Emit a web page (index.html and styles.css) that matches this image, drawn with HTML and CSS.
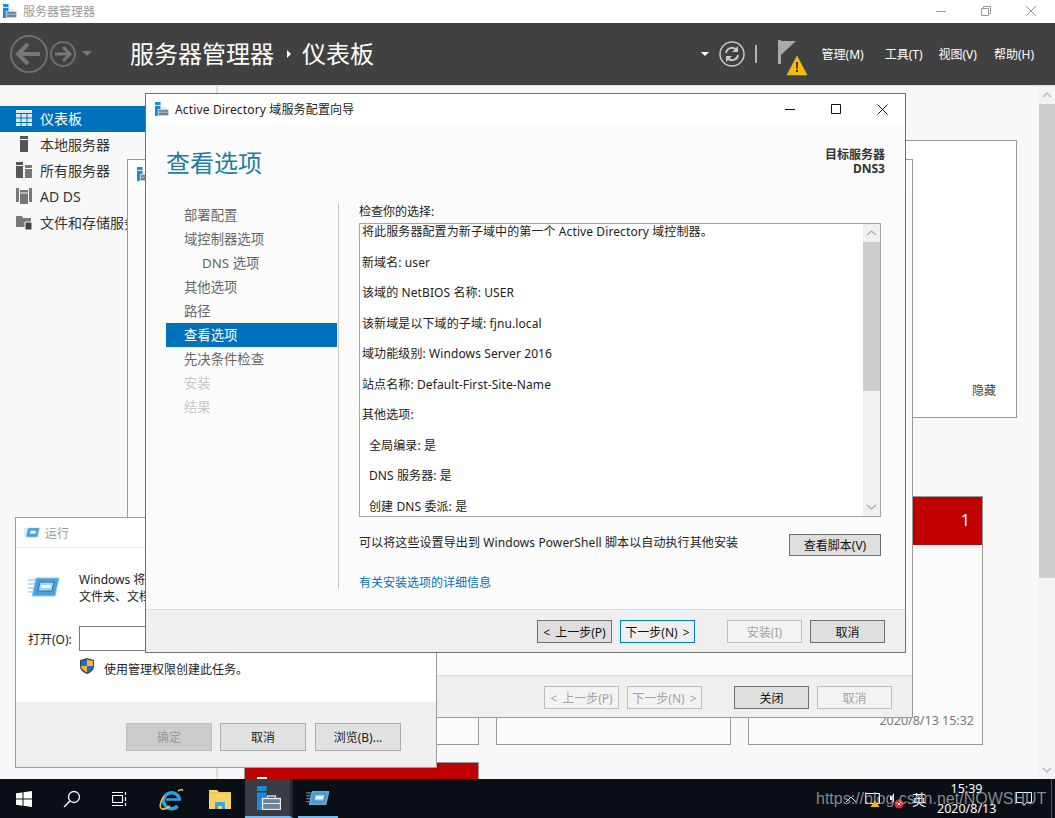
FILE: index.html
```html
<!DOCTYPE html>
<html lang="zh-CN">
<head>
    <meta charset="UTF-8">
    <title>服务器管理器</title>
    <link rel="stylesheet" href="styles.css">
</head>
<body>
    <svg class="sprites" width="0" height="0">
        <symbol id="srv" viewBox="0 0 24 24">
            <rect x="0" y="0" width="9.500" height="5" fill="#1b8ad8"/>
            <rect x="0" y="6.500" width="9.500" height="17.500" fill="#1b8ad8"/>
            <rect x="5.500" y="12.500" width="18" height="11" fill="#6d8496" stroke="#e8eef2" stroke-width="1.300"/>
            <path d="M10.500 12.500V10h8v2.500" fill="none" stroke="#cfd8de" stroke-width="1.300"/>
            <path d="M6 17.500h17" stroke="#e8eef2" stroke-width="1"/>
        </symbol>
        <symbol id="run" viewBox="0 0 32 22">
            <path d="M8 2H31L27 20H4Z" fill="#4d9fdc" stroke="#8ecbf2" stroke-width="1"/>
            <path d="M12 6H26L24 15H10Z" fill="#a5d4f3" stroke="#2c76ad" stroke-width="1"/>
            <path d="M13.500 9H23L22.500 12H13Z" fill="#eef8ff"/>
            <path d="M0 4h7M0 8h6M0 12h5M0 16h4" stroke="#7fbdea" stroke-width="1.200"/>
        </symbol>
    </svg>

    <div class="app">
        <div class="app-title">
            <svg class="ico-srv"><use href="#srv"/></svg>
            <span>服务器管理器</span>
            <div class="win-ctrl">
                <svg width="10" height="10"><path d="M0 5.500h10" stroke="#999"/></svg>
                <svg width="10" height="10"><path d="M.5 2.500h7v7h-7zM2.500 2.500v-2h7v7h-2" fill="none" stroke="#999"/></svg>
                <svg width="10" height="10"><path d="M0 0l10 10M10 0L0 10" stroke="#999"/></svg>
            </div>
        </div>

        <header class="app-header">
            <svg class="nav-btns" width="82" height="40" viewBox="0 0 82 40">
                <circle cx="19" cy="20" r="18" fill="none" stroke="#6e6e6e" stroke-width="2"/>
                <path d="M8 20h22M18 10L8 20l10 10" fill="none" stroke="#777" stroke-width="4"/>
                <circle cx="53" cy="20" r="12" fill="none" stroke="#6e6e6e" stroke-width="2"/>
                <path d="M45 20h15M53 13l7 7-7 7" fill="none" stroke="#777" stroke-width="3"/>
                <path d="M72 17h10l-5 5z" fill="#777"/>
            </svg>
            <div class="crumb">
                <span>服务器管理器</span>
                <i class="crumb-arrow"></i>
                <span>仪表板</span>
            </div>
            <div class="head-tools">
                <i class="drop-arrow"></i>
                <svg class="refresh" width="26" height="26" viewBox="0 0 26 26">
                    <circle cx="13" cy="13" r="12" fill="none" stroke="#c8c8c8" stroke-width="1.500"/>
                    <path d="M7 12a6 6 0 0 1 10.500-3M19 14a6 6 0 0 1-10.500 3" fill="none" stroke="#c8c8c8" stroke-width="2"/>
                    <path d="M19 5v6h-6zM7 21v-6h6z" fill="#c8c8c8"/>
                </svg>
                <i class="head-sep"></i>
                <svg class="flag" width="30" height="36" viewBox="0 0 30 36">
                    <rect x="0" y="0" width="3" height="24" fill="#a9a9a9"/>
                    <path d="M3 1h15L3 15z" fill="#a9a9a9"/>
                    <path d="M19 16l10 19H9z" fill="#fdb900" stroke="#c9c9a0" stroke-width=".5"/>
                    <path d="M18 22h2l-.4 7h-1.200zM18 30h2v2h-2z" fill="#222"/>
                </svg>
                <nav class="menu">
                    <a class="m1">管理(M)</a>
                    <a class="m2">工具(T)</a>
                    <a class="m3">视图(V)</a>
                    <a class="m4">帮助(H)</a>
                </nav>
            </div>
        </header>

        <div class="app-body">
            <aside class="side">
                <div class="side-item active">
                    <svg width="16" height="16" viewBox="0 0 16 16"><path d="M0 0h16v3H0zM0 4h4.500v3.500H0zM5.500 4h5v3.500h-5zM11.500 4H16v3.500h-4.500zM0 8.500h4.500V12H0zM5.500 8.500h5V12h-5zM11.500 8.500H16V12h-4.500zM0 13h4.500v3H0zM5.500 13h5v3h-5zM11.500 13H16v3h-4.500z" fill="#dbeaf5"/></svg>
                    仪表板
                </div>
                <div class="side-item">
                    <svg width="16" height="16" viewBox="0 0 16 16"><path d="M4 0h8v3H4zM4 4h8v12H4z" fill="#555"/></svg>
                    本地服务器
                </div>
                <div class="side-item">
                    <svg width="16" height="16" viewBox="0 0 16 16"><path d="M0 0h7v3H0zM0 4h7v12H0z" fill="#555"/><path d="M9 3h7v3H9zM9 7h7v9H9z" fill="#777"/></svg>
                    所有服务器
                </div>
                <div class="side-item">
                    <svg width="16" height="16" viewBox="0 0 16 16"><path d="M0 0h3v14H0zM13 0h3v14h-3zM4 2h8v14H4z" fill="#777"/><path d="M4 5h8" stroke="#f8f8f8"/></svg>
                    AD DS
                </div>
                <div class="side-item">
                    <svg width="16" height="16" viewBox="0 0 16 16"><path d="M0 2h6l1 2h8v9H0z" fill="#777"/><path d="M9 8h7v8H9z" fill="#444" stroke="#f8f8f8"/></svg>
                    文件和存储服务
                </div>
            </aside>
            <main class="content">
                <section class="welcome">
                    <span class="hide-link">隐藏</span>
                </section>
                <section class="tiles">
                    <div class="tile"><div class="tile-head"></div></div>
                    <div class="tile"><div class="tile-head"></div></div>
                    <div class="tile">
                        <div class="tile-head"><span>1</span></div>
                        <div class="tile-time">2020/8/13 15:32</div>
                    </div>
                    <div class="tile"><div class="tile-head"><i class="tile-mark"></i></div></div>
                </section>
            </main>
            <div class="scrollbar page-scroll">
                <svg class="sb-arrow" width="16" height="18"><path d="M4 11l4-4 4 4" fill="none" stroke="#bbb" stroke-width="1.500"/></svg>
                <div class="sb-thumb"></div>
                <svg class="sb-arrow" width="16" height="18"><path d="M4 7l4 4 4-4" fill="none" stroke="#bbb" stroke-width="1.500"/></svg>
            </div>
        </div>
    </div>

    <footer class="taskbar">
        <svg class="tb-win" width="16" height="16" viewBox="0 0 16 16"><path d="M0 2.300l6.500-.9v6.200H0zM7.500 1.300L16 0v7.600H7.500zM0 8.500h6.500v6.200L0 13.700zM7.500 8.500H16V16l-8.500-1.200z" fill="#fff"/></svg>
        <svg class="tb-search" width="18" height="18" viewBox="0 0 18 18"><circle cx="11" cy="7" r="5.500" fill="none" stroke="#fff" stroke-width="1.300"/><path d="M7 11l-6 6" stroke="#fff" stroke-width="1.500"/></svg>
        <svg class="tb-view" width="16" height="16" viewBox="0 0 16 16"><path d="M.5 4.500h10v7H.5zM0 1.500h11M0 14.500h11M13.500 1v3M13.500 6v4M13.500 12v3" fill="none" stroke="#fff" stroke-width="1.200"/></svg>
        <svg class="tb-ie" width="24" height="24" viewBox="0 0 24 24">
            <path d="M20.500 13.500a8 8 0 1 0-2 5.500" fill="none" stroke="#2f9fe0" stroke-width="3.400"/>
            <path d="M7 12.500h14" stroke="#2f9fe0" stroke-width="2.600"/>
            <path d="M19 4c3-2 5-2 4.500 0M5 9c-4 6-5 12-2 13 2 .6 5-.8 8-3" fill="none" stroke="#f1c232" stroke-width="1.600"/>
        </svg>
        <svg class="tb-folder" width="22" height="20" viewBox="0 0 22 20">
            <path d="M0 1h8l2 2h12v17H0z" fill="#f6d365"/>
            <path d="M0 4h22" stroke="#e8b93f"/>
            <path d="M6 13h10v7h-3v-3H9v3H6z" fill="#39a4e0"/>
        </svg>
        <div class="tb-active"><svg width="24" height="24"><use href="#srv"/></svg></div>
        <div class="tb-running"><svg width="24" height="16"><use href="#run"/></svg></div>
        <div class="tray">
            <svg class="tr-up" width="12" height="8"><path d="M1 7l5-5 5 5" fill="none" stroke="#fff"/></svg>
            <svg class="tr-net" width="16" height="14" viewBox="0 0 16 14">
                <path d="M.5.500h14v10H.5z" fill="none" stroke="#fff"/>
                <path d="M10 7l4.500 7h-9z" fill="#fdb900"/>
            </svg>
            <svg class="tr-vol" width="14" height="16" viewBox="0 0 14 16">
                <path d="M0 3h2l2-3v10L2 7H0z" fill="#fff"/>
                <circle cx="9" cy="11" r="4.500" fill="#d9262e"/>
                <path d="M7.500 9.500l3 3M10.500 9.500l-3 3" stroke="#fff"/>
            </svg>
            <span class="tr-ime">英</span>
            <div class="tr-clock">
                <div>15:39</div>
                <div>2020/8/13</div>
            </div>
            <svg class="tr-note" width="16" height="14" viewBox="0 0 16 14"><path d="M.5.500h15v10h-5l-2.500 3-2.500-3h-5z" fill="none" stroke="#fff"/></svg>
            <i class="tr-show"></i>
        </div>
    </footer>

    <div class="window win-back">
        <div class="back-title"><svg class="ico-srv"><use href="#srv"/></svg></div>
        <div class="back-body"></div>
        <div class="win-foot">
            <button class="btn btn-off">&lt; 上一步(P)</button>
            <button class="btn btn-off">下一步(N) &gt;</button>
            <button class="btn gap-l">关闭</button>
            <button class="btn btn-off">取消</button>
        </div>
    </div>

    <div class="window win-run">
        <div class="run-title">
            <svg width="16" height="11"><use href="#run"/></svg>
            <span>运行</span>
        </div>
        <div class="run-body">
            <div class="run-desc">
                <svg width="32" height="22"><use href="#run"/></svg>
                <p>Windows 将根据你所键入的名称，为你打开相应的程序、<br>文件夹、文档或 Internet 资源。</p>
            </div>
            <div class="run-open">
                <label>打开(O):</label>
                <div class="run-input"></div>
            </div>
            <div class="run-admin">
                <svg width="14" height="16" viewBox="0 0 14 16">
                    <path d="M7 0l7 2v6c0 4-3 6.500-7 8-4-1.500-7-4-7-8V2z" fill="#444"/>
                    <path d="M7 1.500V8H1V3z" fill="#1f6fc4"/>
                    <path d="M7 1.500l6 1.500v5H7z" fill="#f5b93a"/>
                    <path d="M7 8h6c0 3-2.500 5-6 6.500z" fill="#1f6fc4"/>
                    <path d="M7 8v6.500C4 13 1.300 11 1 8z" fill="#f5b93a"/>
                </svg>
                <span>使用管理权限创建此任务。</span>
            </div>
        </div>
        <div class="run-foot">
            <button class="rbtn rbtn-off">确定</button>
            <button class="rbtn">取消</button>
            <button class="rbtn rbtn-last">浏览(B)...</button>
        </div>
    </div>

    <div class="window win-wizard">
        <div class="wiz-title">
            <svg class="ico-srv"><use href="#srv"/></svg>
            <span>Active Directory 域服务配置向导</span>
            <div class="wiz-ctrl">
                <svg width="11" height="11"><path d="M0 5.500h10" stroke="#111"/></svg>
                <svg width="11" height="11"><path d="M.5.500h9v9h-9z" fill="none" stroke="#111"/></svg>
                <svg width="11" height="11"><path d="M.5.500l10 10M10.500.500l-10 10" stroke="#111"/></svg>
            </div>
        </div>
        <div class="wiz-head">
            <h1>查看选项</h1>
            <div class="wiz-target">目标服务器<br>DNS3</div>
        </div>
        <div class="wiz-main">
            <ul class="steps">
                <li>部署配置</li>
                <li>域控制器选项</li>
                <li class="sub">DNS 选项</li>
                <li>其他选项</li>
                <li>路径</li>
                <li class="current">查看选项</li>
                <li>先决条件检查</li>
                <li class="off">安装</li>
                <li class="off">结果</li>
            </ul>
            <div class="pane">
                <div class="pane-label">检查你的选择:</div>
                <div class="review">
                    <div class="review-text">
                        <p>将此服务器配置为新子域中的第一个 Active Directory 域控制器。</p>
                        <p>新域名: user</p>
                        <p>该域的 NetBIOS 名称: USER</p>
                        <p>该新域是以下域的子域: fjnu.local</p>
                        <p>域功能级别: Windows Server 2016</p>
                        <p>站点名称: Default-First-Site-Name</p>
                        <p>其他选项:</p>
                        <p class="indent">全局编录: 是</p>
                        <p class="indent">DNS 服务器: 是</p>
                        <p class="indent">创建 DNS 委派: 是</p>
                    </div>
                    <div class="scrollbar review-scroll">
                        <svg class="sb-arrow" width="17" height="18"><path d="M4 11l4.500-4 4.500 4" fill="none" stroke="#aaa" stroke-width="1.300"/></svg>
                        <div class="sb-thumb"></div>
                        <div class="sb-rest"></div>
                        <svg class="sb-arrow" width="17" height="18"><path d="M4 7l4.500 4 4.500-4" fill="none" stroke="#aaa" stroke-width="1.300"/></svg>
                    </div>
                </div>
                <div class="export-row">
                    <span>可以将这些设置导出到 Windows PowerShell 脚本以自动执行其他安装</span>
                    <button class="btn btn-script">查看脚本(V)</button>
                </div>
                <a class="more-link">有关安装选项的详细信息</a>
            </div>
        </div>
        <div class="win-foot wiz-foot">
            <button class="btn">&lt; 上一步(P)</button>
            <button class="btn btn-focus">下一步(N) &gt;</button>
            <button class="btn btn-off gap-l">安装(I)</button>
            <button class="btn">取消</button>
        </div>
    </div>

    <div class="watermark">https://blog.csdn.net/NOWSHUT</div>
</body>
</html>
```

FILE: styles.css
```css
* {
    box-sizing: border-box;
}
html, body {
    margin: 0;
    height: 100%;
}
body {
    position: relative;
    width: 1055px;
    height: 818px;
    overflow: hidden;
    display: flex;
    flex-direction: column;
    font-family: "Noto Sans", "Noto Sans CJK SC", sans-serif;
    font-size: 12px;
    color: #222;
    background-color: #f8f8f8;
}
.sprites {
    position: absolute;
}
.ico-srv {
    width: 14px;
    height: 14px;
    flex: none;
}

/* main app window */
.app {
    flex: 1;
    min-height: 0;
    display: flex;
    flex-direction: column;
}
.app-title {
    height: 23px;
    display: flex;
    align-items: center;
    padding: 0 0 1px 3px;
    background-color: #fff;
    color: #999;
}
.app-title span {
    margin-left: 6px;
}
.win-ctrl {
    margin-left: auto;
    display: flex;
    gap: 35px;
    padding-right: 19px;
}
.app-header {
    height: 63px;
    flex: none;
    display: flex;
    align-items: center;
    padding-left: 10px;
    background-color: #414141;
    border-bottom: 1px solid #e4e4e4;
    color: #fff;
}
.crumb {
    margin-left: 38px;
    display: flex;
    align-items: center;
    font-size: 24px;
    line-height: 30px;
}
.crumb-arrow {
    width: 0;
    height: 0;
    margin: 0 11px 0 13px;
    border-left: 4px solid #fff;
    border-top: 4px solid transparent;
    border-bottom: 4px solid transparent;
}
.head-tools {
    margin-left: auto;
    display: flex;
    align-items: center;
}
.drop-arrow {
    width: 0;
    height: 0;
    margin-right: 10px;
    border-top: 4px solid #fff;
    border-left: 4px solid transparent;
    border-right: 4px solid transparent;
}
.head-sep {
    width: 2px;
    height: 18px;
    margin: 0 21px 0 10px;
    background-color: #b5b5b5;
}
.flag {
    margin-top: 8px;
    margin-right: 14px;
}
.menu {
    display: flex;
    padding-right: 21px;
}
.menu a {
    white-space: nowrap;
}
.m2 {
    margin-left: 21px;
}
.m3 {
    margin-left: 16px;
}
.m4 {
    margin-left: 17px;
}

.app-body {
    flex: 1;
    min-height: 0;
    display: flex;
    overflow: hidden;
}
.side {
    width: 218px;
    flex: none;
    padding-top: 20px;
    border-right: 2px solid #dedede;
    background-color: #f8f8f8;
}
.side-item {
    height: 26px;
    display: flex;
    align-items: center;
    gap: 8px;
    padding: 0 0 2px 16px;
    font-size: 14px;
    white-space: nowrap;
    color: #333;
}
.side-item.active {
    background-color: #0072bc;
    color: #fff;
}
.content {
    flex: 1;
    min-width: 0;
    padding: 54px 22px 0 8px;
    overflow: hidden;
}
.welcome {
    height: 278px;
    position: relative;
    background-color: #fff;
    border: 1px solid #999;
}
.hide-link {
    position: absolute;
    right: 20px;
    bottom: 18px;
    color: #444;
}
.tiles {
    margin: 78px 0 0 18px;
    display: grid;
    grid-template-columns: repeat(3, 235px);
    grid-auto-rows: 249px;
    column-gap: 17px;
    row-gap: 17px;
}
.tile {
    display: flex;
    flex-direction: column;
    background-color: #fcfcfc;
    border: 1px solid #999;
}
.tile-head {
    height: 48px;
    padding: 12px 12px 0;
    background-color: #c00000;
    color: #fff;
    font-size: 16px;
    text-align: right;
}
.tile-mark {
    display: block;
    width: 10px;
    height: 6px;
    margin-top: 2px;
    background-color: #fff;
}
.tile-time {
    margin-top: auto;
    padding: 0 8px 15px 0;
    text-align: right;
    font-size: 12.500px;
    color: #777;
}

.scrollbar {
    display: flex;
    flex-direction: column;
    background-color: #f3f3f3;
}
.sb-arrow {
    flex: none;
}
.sb-thumb {
    background-color: #cdcdcd;
}
.page-scroll {
    width: 16px;
    flex: none;
}
.page-scroll .sb-thumb {
    height: 474px;
    margin-bottom: auto;
}

/* floating windows */
.window {
    position: absolute;
    display: flex;
    flex-direction: column;
    border: 1px solid #707070;
}
.win-foot {
    display: flex;
    align-items: flex-start;
    gap: 8px;
    justify-content: flex-end;
    background-color: #efefef;
    border-top: 1px solid #dcdcdc;
}
.btn {
    width: 75px;
    height: 23px;
    padding: 0;
    font: inherit;
    word-spacing: 2px;
    color: #111;
    background-color: #dfdfdf;
    border: 1px solid #6f6f6f;
}
.btn-off {
    color: #a3a3a3;
    background-color: #f3f3f3;
    border-color: #bdbdbd;
}
.btn-focus {
    background-color: #efefef;
    border-color: #0078d7;
}
.gap-l {
    margin-left: 24px;
}

.win-back {
    left: 127px;
    top: 159px;
    width: 786px;
    height: 559px;
    border-color: #999;
    background-color: #fcfcfc;
}
.back-title {
    height: 30px;
    padding: 7px 0 0 9px;
    background-color: #fff;
}
.back-body {
    flex: 1;
}
.win-back .win-foot {
    height: 42px;
    padding: 10px 20px 0 0;
}

.win-run {
    left: 15px;
    top: 517px;
    width: 422px;
    height: 251px;
    border: 1px solid #9d9d9d;
    background-color: #fff;
}
.run-title {
    height: 30px;
    display: flex;
    align-items: center;
    gap: 5px;
    padding-left: 8px;
    color: #999;
    border-bottom: 1px solid #eee;
}
.run-body {
    height: 154px;
    padding: 23px 0 0 12px;
}
.run-desc {
    display: flex;
    align-items: flex-start;
}
.run-desc svg {
    margin: 5px 19px 0 0;
}
.run-desc p {
    margin: 0;
    line-height: 17px;
    white-space: nowrap;
}
.run-open {
    margin-top: 21px;
    display: flex;
    align-items: center;
}
.run-open label {
    width: 51px;
}
.run-input {
    flex: 1;
    height: 25px;
    background-color: #fff;
    border: 1px solid #7a7a7a;
}
.run-admin {
    margin: 7px 0 0 52px;
    display: flex;
    align-items: flex-start;
    gap: 10px;
}
.run-admin span {
    margin-top: 3px;
    line-height: 18px;
}
.run-foot {
    flex: 1;
    display: flex;
    align-items: flex-start;
    gap: 8px;
    padding: 21px 0 0 110px;
    background-color: #efefef;
}
.rbtn {
    width: 86px;
    height: 28px;
    padding: 0;
    font: inherit;
    color: #222;
    background-color: #e1e1e1;
    border: 1px solid #adadad;
}
.rbtn-off {
    color: #999;
    background-color: #ccc;
    border-color: #bfbfbf;
}
.rbtn-last {
    margin-left: 1px;
}

.win-wizard {
    left: 145px;
    top: 93px;
    width: 761px;
    height: 560px;
    background-color: #fcfcfc;
}
.wiz-title {
    height: 30px;
    flex: none;
    display: flex;
    align-items: center;
    padding-left: 9px;
    background-color: #fff;
}
.wiz-title span {
    margin-left: 6px;
    white-space: nowrap;
    letter-spacing: 0.15px;
}
.wiz-ctrl {
    margin-left: auto;
    display: flex;
    gap: 35px;
    padding-right: 17px;
}
.wiz-head {
    height: 79px;
    flex: none;
    display: flex;
    justify-content: space-between;
    padding: 22px 20px 0 20px;
}
.wiz-head h1 {
    margin: 0;
    font-size: 24px;
    line-height: 34px;
    font-weight: 400;
    color: #1a7ea8;
}
.wiz-target {
    padding-top: 2px;
    text-align: right;
    font-weight: 700;
    line-height: 14px;
    color: #333;
}
.wiz-main {
    height: 406px;
    flex: none;
    display: flex;
    padding: 0 0 20px 20px;
}
.steps {
    width: 171px;
    flex: none;
    margin: 0;
    padding: 0;
    list-style: none;
    font-size: 13.330px;
    color: #666;
}
.steps li {
    height: 24px;
    line-height: 24px;
    padding-left: 18px;
    white-space: nowrap;
}
.steps li.sub {
    padding-left: 36px;
}
.steps li.current {
    background-color: #0072bc;
    color: #fff;
}
.steps li.off {
    color: #c8c8c8;
}
.pane {
    flex: 1;
    min-width: 0;
    margin: 0 24px 0 1px;
    padding-left: 20px;
    border-left: 1px solid #c8c8c8;
}
.pane-label {
    height: 20px;
    line-height: 18px;
}
.review {
    height: 294px;
    display: flex;
    background-color: #fff;
    border: 1px solid #a6a6a6;
}
.review-text {
    flex: 1;
    min-width: 0;
    overflow: hidden;
    padding-left: 2px;
    letter-spacing: 0.1px;
}
.review-text p {
    margin: 0 0 15.550px;
    line-height: 15px;
    white-space: nowrap;
}
.review-text .indent {
    padding-left: 7px;
}
.review-scroll {
    width: 17px;
    flex: none;
    background-color: #f0f0f0;
}
.review-scroll .sb-thumb {
    height: 149px;
}
.sb-rest {
    flex: 1;
}
.export-row {
    margin-top: 17px;
    height: 22px;
    display: flex;
    justify-content: space-between;
    align-items: center;
}
.export-row span {
    padding-bottom: 7px;
    letter-spacing: 0.1px;
}
.btn-script {
    width: 92px;
    height: 22px;
}
.more-link {
    display: block;
    margin-top: 17px;
    color: #0072bc;
}
.wiz-foot {
    flex: 1;
    padding: 10px 20px 0 0;
}

/* taskbar */
.taskbar {
    height: 39px;
    flex: none;
    display: flex;
    align-items: center;
    background-color: #0a0f16;
    color: #fff;
}
.tb-win {
    margin-left: 16px;
}
.tb-search {
    margin-left: 31px;
}
.tb-view {
    margin-left: 31px;
}
.tb-ie {
    margin-left: 31px;
}
.tb-folder {
    margin-left: 26px;
}
.tb-active {
    width: 48px;
    height: 39px;
    margin-left: 14px;
    display: flex;
    align-items: center;
    padding-left: 12px;
    background-color: #393c42;
    border-right: 3px solid #24272c;
    border-bottom: 2px solid #76b9ed;
}
.tb-running {
    width: 40px;
    height: 39px;
    margin-left: 5px;
    display: flex;
    align-items: center;
    justify-content: center;
    border-bottom: 2px solid #76b9ed;
}
.tray {
    margin-left: auto;
    display: flex;
    align-items: center;
}
.tr-up {
    margin-right: 8px;
}
.tr-net {
    margin: 3px 9px 0 0;
}
.tr-vol {
    margin: 4px 8px 0 0;
}
.tr-ime {
    width: 14px;
    margin-right: 11px;
    font-size: 14px;
}
.tr-clock {
    width: 59px;
    text-align: center;
    font-size: 12.500px;
    line-height: 20px;
    margin-right: 20px;
}
.tr-note {
    margin-right: 19px;
}
.tr-show {
    width: 1px;
    height: 39px;
    margin-right: 3px;
    background-color: #555;
}
.watermark {
    position: absolute;
    left: 816px;
    top: 788px;
    font-family: "Liberation Sans", sans-serif;
    font-size: 16px;
    line-height: 22px;
    white-space: nowrap;
    color: rgba(170, 170, 170, 0.8);
}
```
